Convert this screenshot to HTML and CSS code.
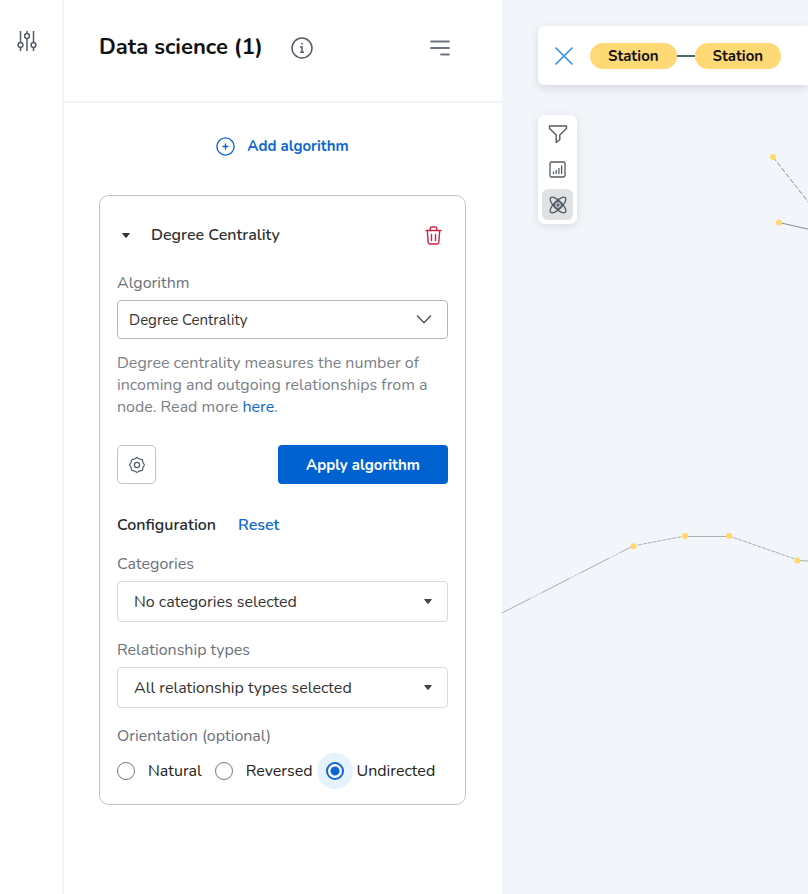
FILE: index.html
```html
<!DOCTYPE html>
<html lang="en">
<head>
<meta charset="utf-8">
<meta name="viewport" content="width=device-width, initial-scale=1">
<title>Data science</title>
<link rel="stylesheet" href="styles.css">
</head>
<body>
<div class="app">
  <nav class="rail" aria-label="Tools">
    <button class="icon-button" type="button" aria-label="Settings">
      <svg width="22" height="22" viewBox="0 0 22 22" fill="none" stroke="#535b66" stroke-width="1.5">
        <path d="M4.5 1v11.5M4.5 17.5V21M11 1v2.5M11 8.500V21M17.500 1v11.500M17.500 17.500V21"/>
        <circle cx="4.500" cy="15" r="2.400"/><circle cx="11" cy="6" r="2.400"/><circle cx="17.500" cy="15" r="2.400"/>
      </svg>
    </button>
  </nav>

  <aside class="panel">
    <header class="panel-header">
      <h1 class="panel-title">Data science (1)</h1>
      <button class="icon-button" type="button" aria-label="Information">
        <svg width="22" height="22" viewBox="0 0 22 22" fill="none" stroke="#535b66" stroke-width="1.500">
          <circle cx="11" cy="11" r="10"/><path d="M9 10h2v5M9.200 15.300h3.800"/><circle cx="11" cy="6.700" r=".5" fill="#535b66" stroke-width="1"/>
        </svg>
      </button>
      <button class="icon-button push-right" type="button" aria-label="Menu">
        <svg width="20" height="18" viewBox="0 0 20 18" fill="none" stroke="#6f757e" stroke-width="1.800" stroke-linecap="round">
          <path d="M1 2.500h18M1 9h18M11 15.500h8"/>
        </svg>
      </button>
    </header>

    <div class="panel-body">
      <button class="add-button" type="button">
        <svg width="19" height="19" viewBox="0 0 19 19" fill="none" stroke="currentColor" stroke-width="1.400" stroke-linecap="round">
          <circle cx="9.500" cy="9.500" r="8.600"/><path d="M9.500 7v5M7 9.500h5"/>
        </svg>
        Add algorithm
      </button>

      <section class="card">
        <div class="card-header">
          <button class="icon-button caret-button" type="button" aria-label="Collapse">
            <svg width="8" height="5" viewBox="0 0 8 5"><path d="M.8 0h6.400q1 0 .4.800L4.600 4.600q-.6.600-1.200 0L.4.800Q-.2 0 .8 0z" fill="#333"/></svg>
          </button>
          <h2 class="card-title">Degree Centrality</h2>
          <button class="icon-button push-right delete-button" type="button" aria-label="Delete">
            <svg width="17" height="19" viewBox="0 0 17 19" fill="none" stroke="#cf2246" stroke-width="1.400" stroke-linecap="round" stroke-linejoin="round">
              <path d="M1 4.500h15M2.300 4.500l.9 12q.1 1.500 1.500 1.500h7.600q1.400 0 1.500-1.500l.9-12M5.200 4.300V2.500Q5.200 1 6.700 1h3.600q1.500 0 1.500 1.500v1.800M6.500 8.500v6M10.500 8.500v6"/>
            </svg>
          </button>
        </div>

        <div class="field">
          <label class="label" for="algorithm">Algorithm</label>
          <div class="select-wrap">
            <select class="select select-main" id="algorithm"><option>Degree Centrality</option></select>
            <svg class="chevron" width="16" height="9" viewBox="0 0 16 9" fill="none" stroke="#535b66" stroke-width="1.500" stroke-linecap="round" stroke-linejoin="round"><path d="M1.500 1l6.500 6.800L14.500 1"/></svg>
          </div>
        </div>

        <p class="description">Degree centrality measures the number of incoming and outgoing relationships from a node. Read more <a class="link" href="#">here</a>.</p>

        <div class="actions">
          <button class="settings-button" type="button" aria-label="Configure">
            <svg width="16" height="16" viewBox="0 0 16 16" fill="none" stroke="#535b66" stroke-width="1.200" stroke-linejoin="round">
              <path d="M6.400 1.600Q8-.2 9.600 1.600Q10.300 2.300 11.400 2.200Q13.800 2.200 13.800 4.600Q13.700 5.700 14.400 6.400Q16.200 8 14.400 9.600Q13.700 10.300 13.800 11.400Q13.800 13.800 11.400 13.800Q10.300 13.700 9.600 14.400Q8 16.200 6.400 14.400Q5.700 13.700 4.600 13.800Q2.200 13.800 2.200 11.400Q2.300 10.300 1.600 9.600Q-.2 8 1.600 6.400Q2.300 5.700 2.200 4.600Q2.200 2.200 4.600 2.200Q5.700 2.300 6.400 1.600z"/>
              <circle cx="8" cy="8" r="2.600"/>
            </svg>
          </button>
          <button class="apply-button" type="button">Apply algorithm</button>
        </div>

        <div class="config-header">
          <h3 class="config-title">Configuration</h3>
          <button class="reset-button" type="button">Reset</button>
        </div>

        <div class="field">
          <label class="label" for="categories">Categories</label>
          <div class="select-wrap">
            <select class="select" id="categories"><option>No categories selected</option></select>
            <svg class="chevron" width="8" height="5" viewBox="0 0 8 5"><path d="M.8 0h6.400q1 0 .4.800L4.600 4.600q-.6.600-1.200 0L.4.800Q-.2 0 .8 0z" fill="#444"/></svg>
          </div>
        </div>

        <div class="field">
          <label class="label" for="relationships">Relationship types</label>
          <div class="select-wrap">
            <select class="select" id="relationships"><option>All relationship types selected</option></select>
            <svg class="chevron" width="8" height="5" viewBox="0 0 8 5"><path d="M.8 0h6.400q1 0 .4.800L4.600 4.600q-.6.600-1.200 0L.4.800Q-.2 0 .8 0z" fill="#444"/></svg>
          </div>
        </div>

        <fieldset class="field orientation">
          <legend class="label">Orientation (optional)</legend>
          <div class="radios">
            <label class="radio-label"><input class="radio" type="radio" name="orientation">Natural</label>
            <label class="radio-label"><input class="radio" type="radio" name="orientation">Reversed</label>
            <label class="radio-label"><input class="radio" type="radio" name="orientation" checked>Undirected</label>
          </div>
        </fieldset>
      </section>
    </div>
  </aside>

  <main class="canvas">
    <svg class="graph" width="306" height="894" viewBox="0 0 306 894" aria-hidden="true">
      <g fill="none" stroke="#a9acb0" stroke-width="1">
        <path d="M0 613L131 546" stroke-dasharray="32 0 1 1 1 1 1 1 1 1 1 1 1 1"/>
        <path d="M131 546L183 536M227 536L296 560" stroke-dasharray="4 1"/>
        <path d="M183 536.500H227M296 560.500L306 561"/>
        <path d="M271 157L311 208" stroke-dasharray="5 2" stroke="#888b8f"/>
        <path d="M277 222.500L310 230" stroke="#888b8f"/>
      </g>
      <g fill="#ffd86e">
        <circle cx="271" cy="157" r="3"/><circle cx="277" cy="222.500" r="3"/>
        <circle cx="131.500" cy="546.300" r="3"/><circle cx="183" cy="536" r="3"/><circle cx="227" cy="536" r="3"/><circle cx="295.500" cy="560.500" r="3"/>
      </g>
    </svg>

    <div class="search-bar">
      <button class="icon-button" type="button" aria-label="Clear search">
        <svg width="18" height="18" viewBox="0 0 18 18" fill="none" stroke="#2e90f5" stroke-width="1.600" stroke-linecap="round"><path d="M1 1l16 16M17 1L1 17"/></svg>
      </button>
      <div class="pattern">
        <span class="pill">Station</span>
        <span class="connector"></span>
        <span class="pill">Station</span>
      </div>
    </div>

    <div class="toolbar" role="toolbar" aria-label="Scene tools">
      <button class="tool" type="button" aria-label="Filter">
        <svg width="20" height="20" viewBox="0 0 20 20" fill="none" stroke="#535b66" stroke-width="1.400" stroke-linejoin="round"><path d="M1.500 1h17v2.500L11.800 10v4.500L8.200 17.500V10L1.500 3.500z"/></svg>
      </button>
      <button class="tool" type="button" aria-label="Statistics">
        <svg width="17" height="17" viewBox="0 0 17 17" fill="none" stroke="#535b66" stroke-width="1.300" stroke-linecap="round"><rect x="1" y="1" width="15" height="15" rx="1.500"/><path d="M4.500 11v1.500M7.200 9.500v3M9.900 7.500v5M12.600 5v7.500"/></svg>
      </button>
      <button class="tool tool-active" type="button" aria-label="Data science">
        <svg width="20" height="20" viewBox="0 0 20 20" fill="none" stroke="#535b66" stroke-width="1.300"><ellipse cx="10" cy="10" rx="10.300" ry="4" transform="rotate(45 10 10)"/><ellipse cx="10" cy="10" rx="10.300" ry="4" transform="rotate(-45 10 10)"/><circle cx="10" cy="10" r="3.400"/><circle cx="10" cy="10" r="1"/></svg>
      </button>
    </div>
  </main>
</div>
</body>
</html>
```
FILE: styles.css
```css
* { box-sizing: border-box; }

body {
  margin: 0;
  font-family: "Nunito", "Open Sans", sans-serif;
  font-size: 16px;
  line-height: 22px;
  color: #333;
  background: #fff;
}

h1, h2, h3, p { margin: 0; }

button, select {
  font: inherit;
  color: inherit;
  margin: 0;
}

button {
  padding: 0;
  border: 0;
  background: none;
  cursor: pointer;
}

svg { display: block; flex: none; }

.app {
  display: grid;
  grid-template-columns: 64px 438px minmax(0, 1fr);
  min-height: 100vh;
}

.rail {
  display: flex;
  flex-direction: column;
  align-items: center;
  padding: 30px 8px 0 0;
  border-right: 2px solid #f0f4f8;
}

.icon-button {
  display: flex;
  align-items: center;
  justify-content: center;
}

.push-right { margin-left: auto; }

.panel-header {
  display: flex;
  align-items: center;
  gap: 28px;
  padding: 32px 52px 38px 35px;
  border-bottom: 2px solid #f0f4f8;
}

.panel-title {
  font-size: 22px;
  line-height: 31px;
  font-weight: 700;
  color: #111;
}

.panel-body {
  display: flex;
  flex-direction: column;
  padding: 32px 36px 32px 35px;
}

.add-button {
  display: flex;
  align-items: center;
  align-self: center;
  gap: 12px;
  font-size: 15px;
  font-weight: 700;
  color: #0c67d3;
}

.card {
  margin-top: 38px;
  padding: 19px 17px 15px;
  border: 1px solid #bec3c9;
  border-radius: 10px;
}

.card-header {
  display: flex;
  align-items: center;
  height: 40px;
}

.caret-button { width: 17px; height: 24px; }

.delete-button { width: 30px; height: 30px; }

.card-title {
  margin-left: 17px;
  font-size: 16px;
  font-weight: 600;
}

.field { margin-top: 17px; }

.label {
  display: block;
  padding: 0;
  color: #6a717c;
}

.select-wrap {
  display: flex;
  align-items: center;
  position: relative;
  margin-top: 6px;
}

.select {
  appearance: none;
  width: 100%;
  height: 41px;
  padding: 0 40px 0 16px;
  border: 1px solid #d8dade;
  border-radius: 4px;
  background: #fff;
}

.select-main {
  height: 39px;
  padding-left: 11px;
  border-color: #b1b6bf;
  font-size: 15px;
}

.chevron {
  position: absolute;
  right: 16px;
  pointer-events: none;
}

.description {
  margin-top: 13px;
  padding-right: 16px;
  color: #7a7f88;
}

.link { color: #0c67d3; text-decoration: none; }

.actions {
  display: flex;
  justify-content: space-between;
  margin-top: 27px;
}

.settings-button {
  display: flex;
  align-items: center;
  justify-content: center;
  width: 39px;
  height: 39px;
  border: 1px solid #bec3c9;
  border-radius: 5px;
}

.apply-button {
  padding: 0 28px;
  border-radius: 4px;
  background: #0062d1;
  color: #fff;
  font-size: 15px;
  font-weight: 700;
}

.config-header {
  display: flex;
  gap: 22px;
  margin-top: 30px;
}

.config-title {
  font-size: 16px;
  font-weight: 600;
  color: #252a30;
}

.reset-button {
  color: #0c67d3;
  font-weight: 600;
}

.orientation {
  min-width: 0;
  padding: 0;
  margin: 17px 0 0;
  border: 0;
}

.radios {
  display: flex;
  gap: 13px;
  padding: 13px 0 7px;
}

.radio-label {
  display: flex;
  align-items: center;
  gap: 13px;
  color: #222;
}

.radio {
  appearance: none;
  flex: none;
  width: 18px;
  height: 18px;
  margin: 0;
  border: 1px solid #717780;
  border-radius: 50%;
  background: #fff;
}

.radio:checked {
  border: 2px solid #0c67d3;
  background: radial-gradient(circle, #0c67d3 4px, #fff 5px);
  box-shadow: 0 0 0 9px #e6f2fe;
}

.canvas {
  position: relative;
  overflow: hidden;
  padding: 26px 0 0 36px;
  background: #f2f5f9;
}

.graph {
  position: absolute;
  top: 0;
  left: 0;
}

.search-bar {
  position: relative;
  display: flex;
  align-items: center;
  gap: 17px;
  height: 59px;
  padding-left: 17px;
  border-radius: 6px 0 0 6px;
  background: #fff;
  box-shadow: 0 3px 8px rgba(60, 75, 95, 0.16);
}

.pattern { display: flex; align-items: center; }

.pill {
  padding: 2px 18px;
  border-radius: 13px;
  background: #ffd976;
  color: #111;
  font-size: 15px;
  font-weight: 700;
}

.connector {
  width: 18px;
  height: 2px;
  background: #4d686b;
}

.toolbar {
  position: relative;
  display: inline-flex;
  flex-direction: column;
  gap: 4px;
  margin-top: 30px;
  padding: 4px;
  border-radius: 7px;
  background: #fff;
  box-shadow: 0 2px 8px rgba(60, 75, 95, 0.14);
}

.tool {
  display: flex;
  align-items: center;
  justify-content: center;
  width: 31px;
  height: 31px;
  border-radius: 6px;
}

.tool-active { background: #dfe1e3; }
```
